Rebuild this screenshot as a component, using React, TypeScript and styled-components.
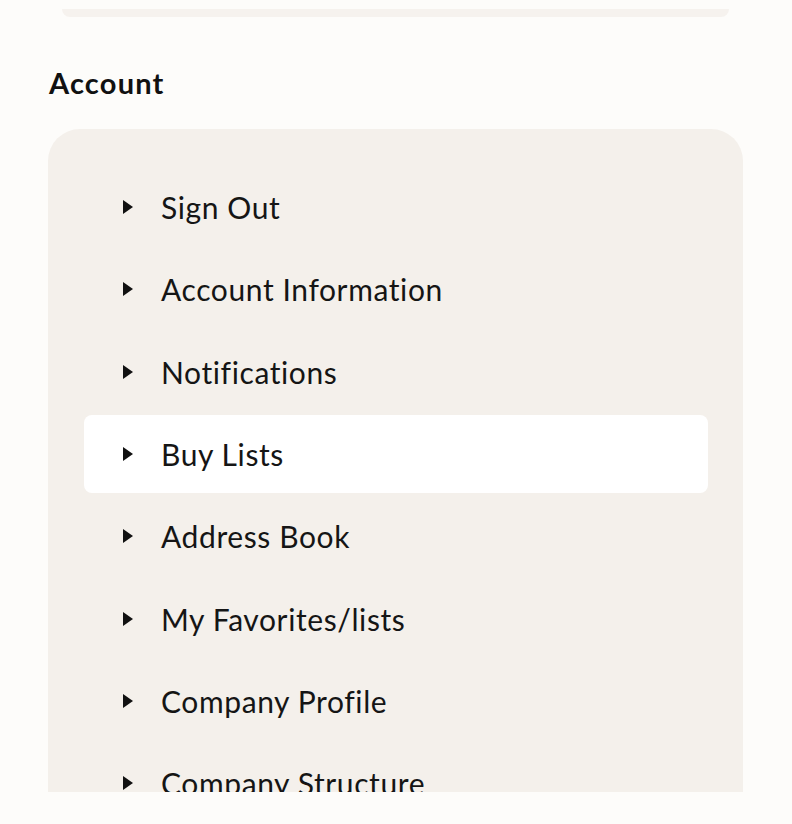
import React from "react";
import styled, { createGlobalStyle } from "styled-components";

const Global = createGlobalStyle`
  html, body { margin: 0; padding: 0; background: #fdfcfa; }
  body { font-family: "Lato", "Noto Sans", sans-serif; color: #111; }
`;

const Page = styled.div`
  height: 792px;
  overflow: hidden;
  padding: 0 49px 0 48px;
  box-sizing: border-box;
  display: flex;
  flex-direction: column;
`;

const PrevCardEdge = styled.div`
  flex-shrink: 0;
  margin: 9px 14px 0 14px;
  height: 8px;
  background: #f6f2ee;
  border-radius: 0 0 28px 28px;
`;

const Heading = styled.h2`
  flex-shrink: 0;
  margin: 49px 0 0 1px;
  font-size: 29px;
  line-height: 34px;
  font-weight: 700;
  color: #111;
  letter-spacing: 1.2px;
`;

const Card = styled.div`
  margin-top: 29px;
  background: #f4f0eb;
  border-radius: 32px;
  padding: 39px 35px 40px 36px;
  display: flex;
  flex-direction: column;
  gap: 4.33px;
  flex-shrink: 0;
`;

const Row = styled.div<{ $active?: boolean }>`
  height: 78px;
  display: flex;
  align-items: center;
  gap: 28px;
  padding-left: 39px;
  border-radius: 8px;
  background: ${(p) => (p.$active ? "#ffffff" : "transparent")};
`;

const Caret = styled.span`
  flex-shrink: 0;
  width: 0;
  height: 0;
  border-top: 7.5px solid transparent;
  border-bottom: 7.5px solid transparent;
  border-left: 10px solid #111;
`;

const Label = styled.span`
  font-size: 30px;
  line-height: 36px;
  font-weight: 400;
  color: #151515;
  letter-spacing: 0.6px;
`;

const items = [
  "Sign Out",
  "Account Information",
  "Notifications",
  "Buy Lists",
  "Address Book",
  "My Favorites/lists",
  "Company Profile",
  "Company Structure",
];

export default function App() {
  return (
    <>
      <Global />
      <Page>
        <PrevCardEdge />
        <Heading>Account</Heading>
        <Card>
          {items.map((t) => (
            <Row key={t} $active={t === "Buy Lists"}>
              <Caret />
              <Label>{t}</Label>
            </Row>
          ))}
        </Card>
      </Page>
    </>
  );
}
